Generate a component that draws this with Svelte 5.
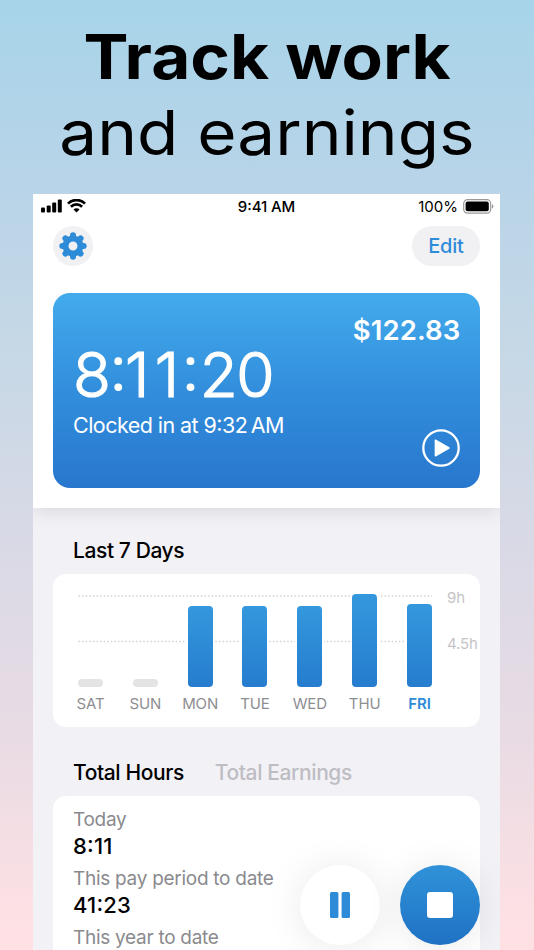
<script>
	const days = [
		{ name: 'SAT', height: 0 },
		{ name: 'SUN', height: 0 },
		{ name: 'MON', height: 81 },
		{ name: 'TUE', height: 81 },
		{ name: 'WED', height: 81 },
		{ name: 'THU', height: 93 },
		{ name: 'FRI', height: 83 }
	];

	const totals = [
		{ label: 'Today', value: '8:11' },
		{ label: 'This pay period to date', value: '41:23' },
		{ label: 'This year to date', value: '' }
	];

	const gearAngles = [0, 45, 90, 135, 180, 225, 270, 315];

	let today = $state('FRI');
	let tab = $state('hours');
</script>

<div class="page">
	<h1>
		<span class="bold">Track work</span>
		<span class="light">and earnings</span>
	</h1>

	<div class="phone">
		<header>
			<div class="status">
				<div class="signal">
					<svg width="21" height="14" viewBox="0 0 21 14">
						<rect x="0" y="8.6" width="4" height="5" rx="1.1" />
						<rect x="5.7" y="6.4" width="4" height="7.2" rx="1.1" />
						<rect x="11.2" y="3.4" width="4" height="10.2" rx="1.1" />
						<rect x="16.8" y="0.4" width="4" height="13.2" rx="1.1" />
					</svg>
					<svg width="19" height="14" viewBox="0 0 19 14">
						<path d="M1 4.6A12 12 0 0 1 18 4.6" class="wave" />
						<path d="M3.9 7.8A7.8 7.8 0 0 1 15.1 7.8" class="wave" />
						<path d="M9.5 13.6L6.5 10.6A4.2 4.2 0 0 1 12.5 10.6Z" />
					</svg>
				</div>
				<span class="time">9:41 AM</span>
				<div class="battery">
					<span>100%</span>
					<svg width="31" height="15" viewBox="0 0 31 15">
						<rect x="0.7" y="0.7" width="27" height="13.4" rx="3.8" class="shell" />
						<rect x="2.6" y="2.6" width="23.2" height="9.6" rx="2" />
						<path d="M29 5.2Q30.4 5.8 30.4 7.4T29 9.6Z" class="cap" />
					</svg>
				</div>
			</div>

			<div class="toolbar">
				<button class="settings" aria-label="Settings">
					<svg width="28" height="28" viewBox="-14 -14 28 28">
						<circle r="7.5" class="gear" stroke-width="6" />
						{#each gearAngles as angle}
							<path d="M0 -8.5V-10.7" class="gear" stroke-width="6" stroke-linecap="round" transform="rotate({angle})" />
						{/each}
					</svg>
				</button>
				<button class="edit">Edit</button>
			</div>

			<div class="clock">
				<div class="earned">$122.83</div>
				<div class="timer">8<span class="colon">:</span><span class="one">1</span><span class="last">1</span><span class="second-colon">:</span>20</div>
				<div class="bottom">
					<span class="since">Clocked in at 9:32<i></i>AM</span>
					<svg class="play" width="38" height="38" viewBox="0 0 38 38">
						<circle cx="19" cy="19" r="17.7" />
						<path d="M13.4 11.2V26.8L27 19Z" />
					</svg>
				</div>
			</div>
		</header>

		<h2>Last 7 Days</h2>
		<div class="chart">
			<div class="plot">
				<svg class="grid" width="354" height="94" viewBox="0 0 354 94">
					<line x1="0.5" y1="2" x2="354" y2="2" />
					<line x1="0.5" y1="47.5" x2="354" y2="47.5" />
				</svg>
				{#each days as day}
					<div class="day" class:active={day.name === today}>
						<div class="bar" class:empty={!day.height} style="height: {day.height || 7.5}px"></div>
						<span>{day.name}</span>
					</div>
				{/each}
			</div>
			<div class="scale">
				<span>9h</span>
				<span>4.5h</span>
			</div>
		</div>

		<div class="tabs">
			<button class:selected={tab === 'hours'} onclick={() => (tab = 'hours')}>Total Hours</button>
			<button class:selected={tab === 'earnings'} onclick={() => (tab = 'earnings')}>Total Earnings</button>
		</div>
		<dl>
			{#each totals as total}
				<dt>{total.label}</dt>
				<dd>{total.value}</dd>
			{/each}
		</dl>

		<!-- Floating controls over the list -->
		<div class="controls">
			<button class="pause" aria-label="Pause">
				<svg width="20" height="26" viewBox="0 0 20 26">
					<rect width="8.4" height="26" rx="1.5" />
					<rect x="11.6" width="8.4" height="26" rx="1.5" />
				</svg>
			</button>
			<button class="stop" aria-label="Stop">
				<svg width="26" height="26"><rect width="26" height="26" rx="3" /></svg>
			</button>
		</div>
	</div>
</div>

<style>
	:global(body) {
		overflow: hidden;
	}

	.page {
		height: 950px;
		overflow: hidden;
		display: flex;
		flex-direction: column;
		font-family: Inter, 'Liberation Sans', sans-serif;
		background: linear-gradient(#a7d4e9 0, #b8d4e8 180px, #c6d8e6 350px, #d5d9e6 500px, #e8dbe4 730px, #ffe1e4 940px);
	}

	button {
		border: 0;
		padding: 0;
		margin: 0;
		font-family: inherit;
		letter-spacing: inherit;
		background: none;
		cursor: pointer;
	}

	svg {
		display: block;
	}

	h1 {
		margin: 0;
		height: 194px;
		flex: none;
		padding-top: 19px;
		box-sizing: border-box;
		font-size: 62px;
		line-height: 76px;
		text-align: center;
		white-space: nowrap;
	}

	/* Wide geometric look for the headline */
	h1 span {
		display: block;
		transform: scaleX(1.088);
	}

	.bold {
		font-weight: 700;
	}

	.light {
		font-weight: 400;
	}

	.phone {
		position: relative;
		flex: 1;
		width: 467px;
		margin-left: 33px;
		overflow: hidden;
		background: #f2f1f6;
	}

	/* White top part */
	header {
		height: 314px;
		box-sizing: border-box;
		padding: 3px 20px 0;
		background: #fff;
		box-shadow: 0 1px 20px rgba(0, 0, 0, 0.13);
	}

	.status {
		display: grid;
		grid-template-columns: 1fr auto 1fr;
		align-items: center;
		height: 18px;
		margin: 0 -14px 0 -12px;
		font-size: 15px;
		font-feature-settings: 'case';
	}

	.signal {
		display: flex;
		gap: 5px;
		padding-bottom: 1px;
	}

	.wave {
		fill: none;
		stroke: #000;
		stroke-width: 2.7;
	}

	.time {
		font-weight: 500;
		letter-spacing: -0.1px;
		margin-left: -2px;
	}

	.battery {
		display: flex;
		justify-content: flex-end;
		align-items: center;
		gap: 5px;
	}

	.battery svg {
		margin-top: -1px;
	}

	.shell {
		fill: none;
		stroke: #999;
		stroke-width: 1.2;
	}

	.cap {
		fill: #999;
	}

	.toolbar {
		display: flex;
		justify-content: space-between;
		margin-top: 11px;
	}

	.settings {
		width: 40px;
		height: 40px;
		display: flex;
		align-items: center;
		justify-content: center;
		border-radius: 50%;
		background: #f1f1f4;
	}

	.gear {
		fill: none;
		stroke: #2e8bd8;
	}

	.edit {
		width: 68px;
		height: 40px;
		border-radius: 20px;
		font-size: 20px;
		font-weight: 500;
		letter-spacing: -0.2px;
		color: #2e8bd8;
		background: #f1f1f4;
	}

	/* Blue clock card */
	.clock {
		height: 195px;
		box-sizing: border-box;
		margin-top: 27.4px;
		margin-right: -0.4px;
		padding: 21px 20px 0;
		border-radius: 17px;
		color: #fff;
		background: linear-gradient(#43abec, #328edc 50%, #2877ce);
	}

	.earned {
		font-size: 27.5px;
		line-height: 33px;
		font-weight: 570;
		letter-spacing: 0.1px;
		text-align: right;
	}

	.timer {
		font-size: 62px;
		line-height: 62px;
		margin-top: -3px;
		font-weight: 300;
		letter-spacing: -1.5px;
		font-feature-settings: 'case';
		-webkit-text-stroke: 1.2px #fff;
		stroke-linejoin: round;
	}

	.colon {
		letter-spacing: -2px;
	}

	.one {
		letter-spacing: 5.5px;
	}

	.last {
		letter-spacing: 2.5px;
	}

	.second-colon {
		letter-spacing: 0.5px;
	}

	.bottom {
		display: flex;
		justify-content: space-between;
		align-items: flex-start;
		padding-top: 6px;
	}

	.since {
		font-size: 21.5px;
		line-height: 26px;
		letter-spacing: -0.55px;
		font-feature-settings: 'case';
	}

	.since i {
		display: inline-block;
		width: 3.5px;
	}

	.play {
		margin-top: 17px;
		fill: #fff;
	}

	.play circle {
		fill: none;
		stroke: #fff;
		stroke-width: 2.3;
	}

	.play path {
		stroke: #fff;
		stroke-width: 1.5;
		stroke-linejoin: round;
	}

	h2 {
		margin: 30px 0 0 40px;
		height: 36px;
		font-size: 21px;
		line-height: 26px;
		font-weight: 500;
		letter-spacing: -0.4px;
	}

	/* Week chart */
	.chart {
		display: flex;
		box-sizing: border-box;
		width: 427.4px;
		height: 153px;
		margin-left: 20px;
		padding: 19.5px 0 0 25px;
		border-radius: 13px;
		background: #fff;
	}

	.plot {
		position: relative;
		display: flex;
		justify-content: space-between;
		width: 354px;
		flex: none;
	}

	.grid {
		position: absolute;
		left: 0;
		top: 0;
	}

	.grid line {
		stroke: #d0d0d3;
		stroke-width: 1.4;
		stroke-dasharray: 1.4 2.2;
	}

	.day {
		position: relative;
		display: flex;
		flex-direction: column;
		align-items: center;
		width: 25px;
	}

	.bar {
		width: 25px;
		margin-top: auto;
		flex: none;
		border-radius: 4px;
		background: linear-gradient(#3498dd, #267cce);
		box-shadow: 0 0 0 2px #fff;
	}

	.bar.empty {
		background: #e4e4e5;
	}

	.day span {
		height: 40.5px;
		padding-top: 8px;
		box-sizing: border-box;
		flex: none;
		font-size: 15px;
		line-height: 18px;
		letter-spacing: -0.1px;
		color: #8e8e92;
	}

	.day.active span {
		font-weight: 600;
		color: #2e8bd8;
	}

	.scale {
		display: flex;
		flex-direction: column;
		gap: 28px;
		margin: -5px 0 0 15px;
		font-size: 15px;
		line-height: 18px;
		letter-spacing: -0.1px;
		color: #c4c4c7;
	}

	/* Totals */
	.tabs {
		display: flex;
		gap: 31px;
		margin: 33px 0 0 40px;
		height: 35.5px;
		letter-spacing: -0.4px;
	}

	.tabs button {
		height: 26px;
		font-size: 21px;
		line-height: 26px;
		font-weight: 500;
		color: #bebdc3;
	}

	.tabs button.selected {
		color: #000;
	}

	dl {
		width: 427.4px;
		height: 200px;
		box-sizing: border-box;
		margin: 0 0 0 20px;
		padding: 11px 20px;
		border-radius: 13px;
		background: #fff;
	}

	dt {
		font-size: 19px;
		line-height: 26px;
		letter-spacing: -0.28px;
		color: #8a8a8e;
	}

	dd {
		margin: -1px 0 0;
		height: 34.4px;
		font-size: 22px;
		line-height: 28px;
		font-weight: 500;
		letter-spacing: 0.2px;
		font-feature-settings: 'case';
	}

	.controls {
		position: absolute;
		right: 20px;
		bottom: 5px;
		display: flex;
		gap: 20px;
	}

	.controls button {
		width: 80px;
		height: 80px;
		display: flex;
		align-items: center;
		justify-content: center;
		border-radius: 50%;
		box-shadow: 0 2px 38px rgba(0, 0, 0, 0.09);
	}

	.controls .pause {
		background: #fff;
		fill: #2e8bd8;
	}

	.controls .stop {
		background: linear-gradient(#3092d8, #1f72c4);
		fill: #fff;
	}
</style>
